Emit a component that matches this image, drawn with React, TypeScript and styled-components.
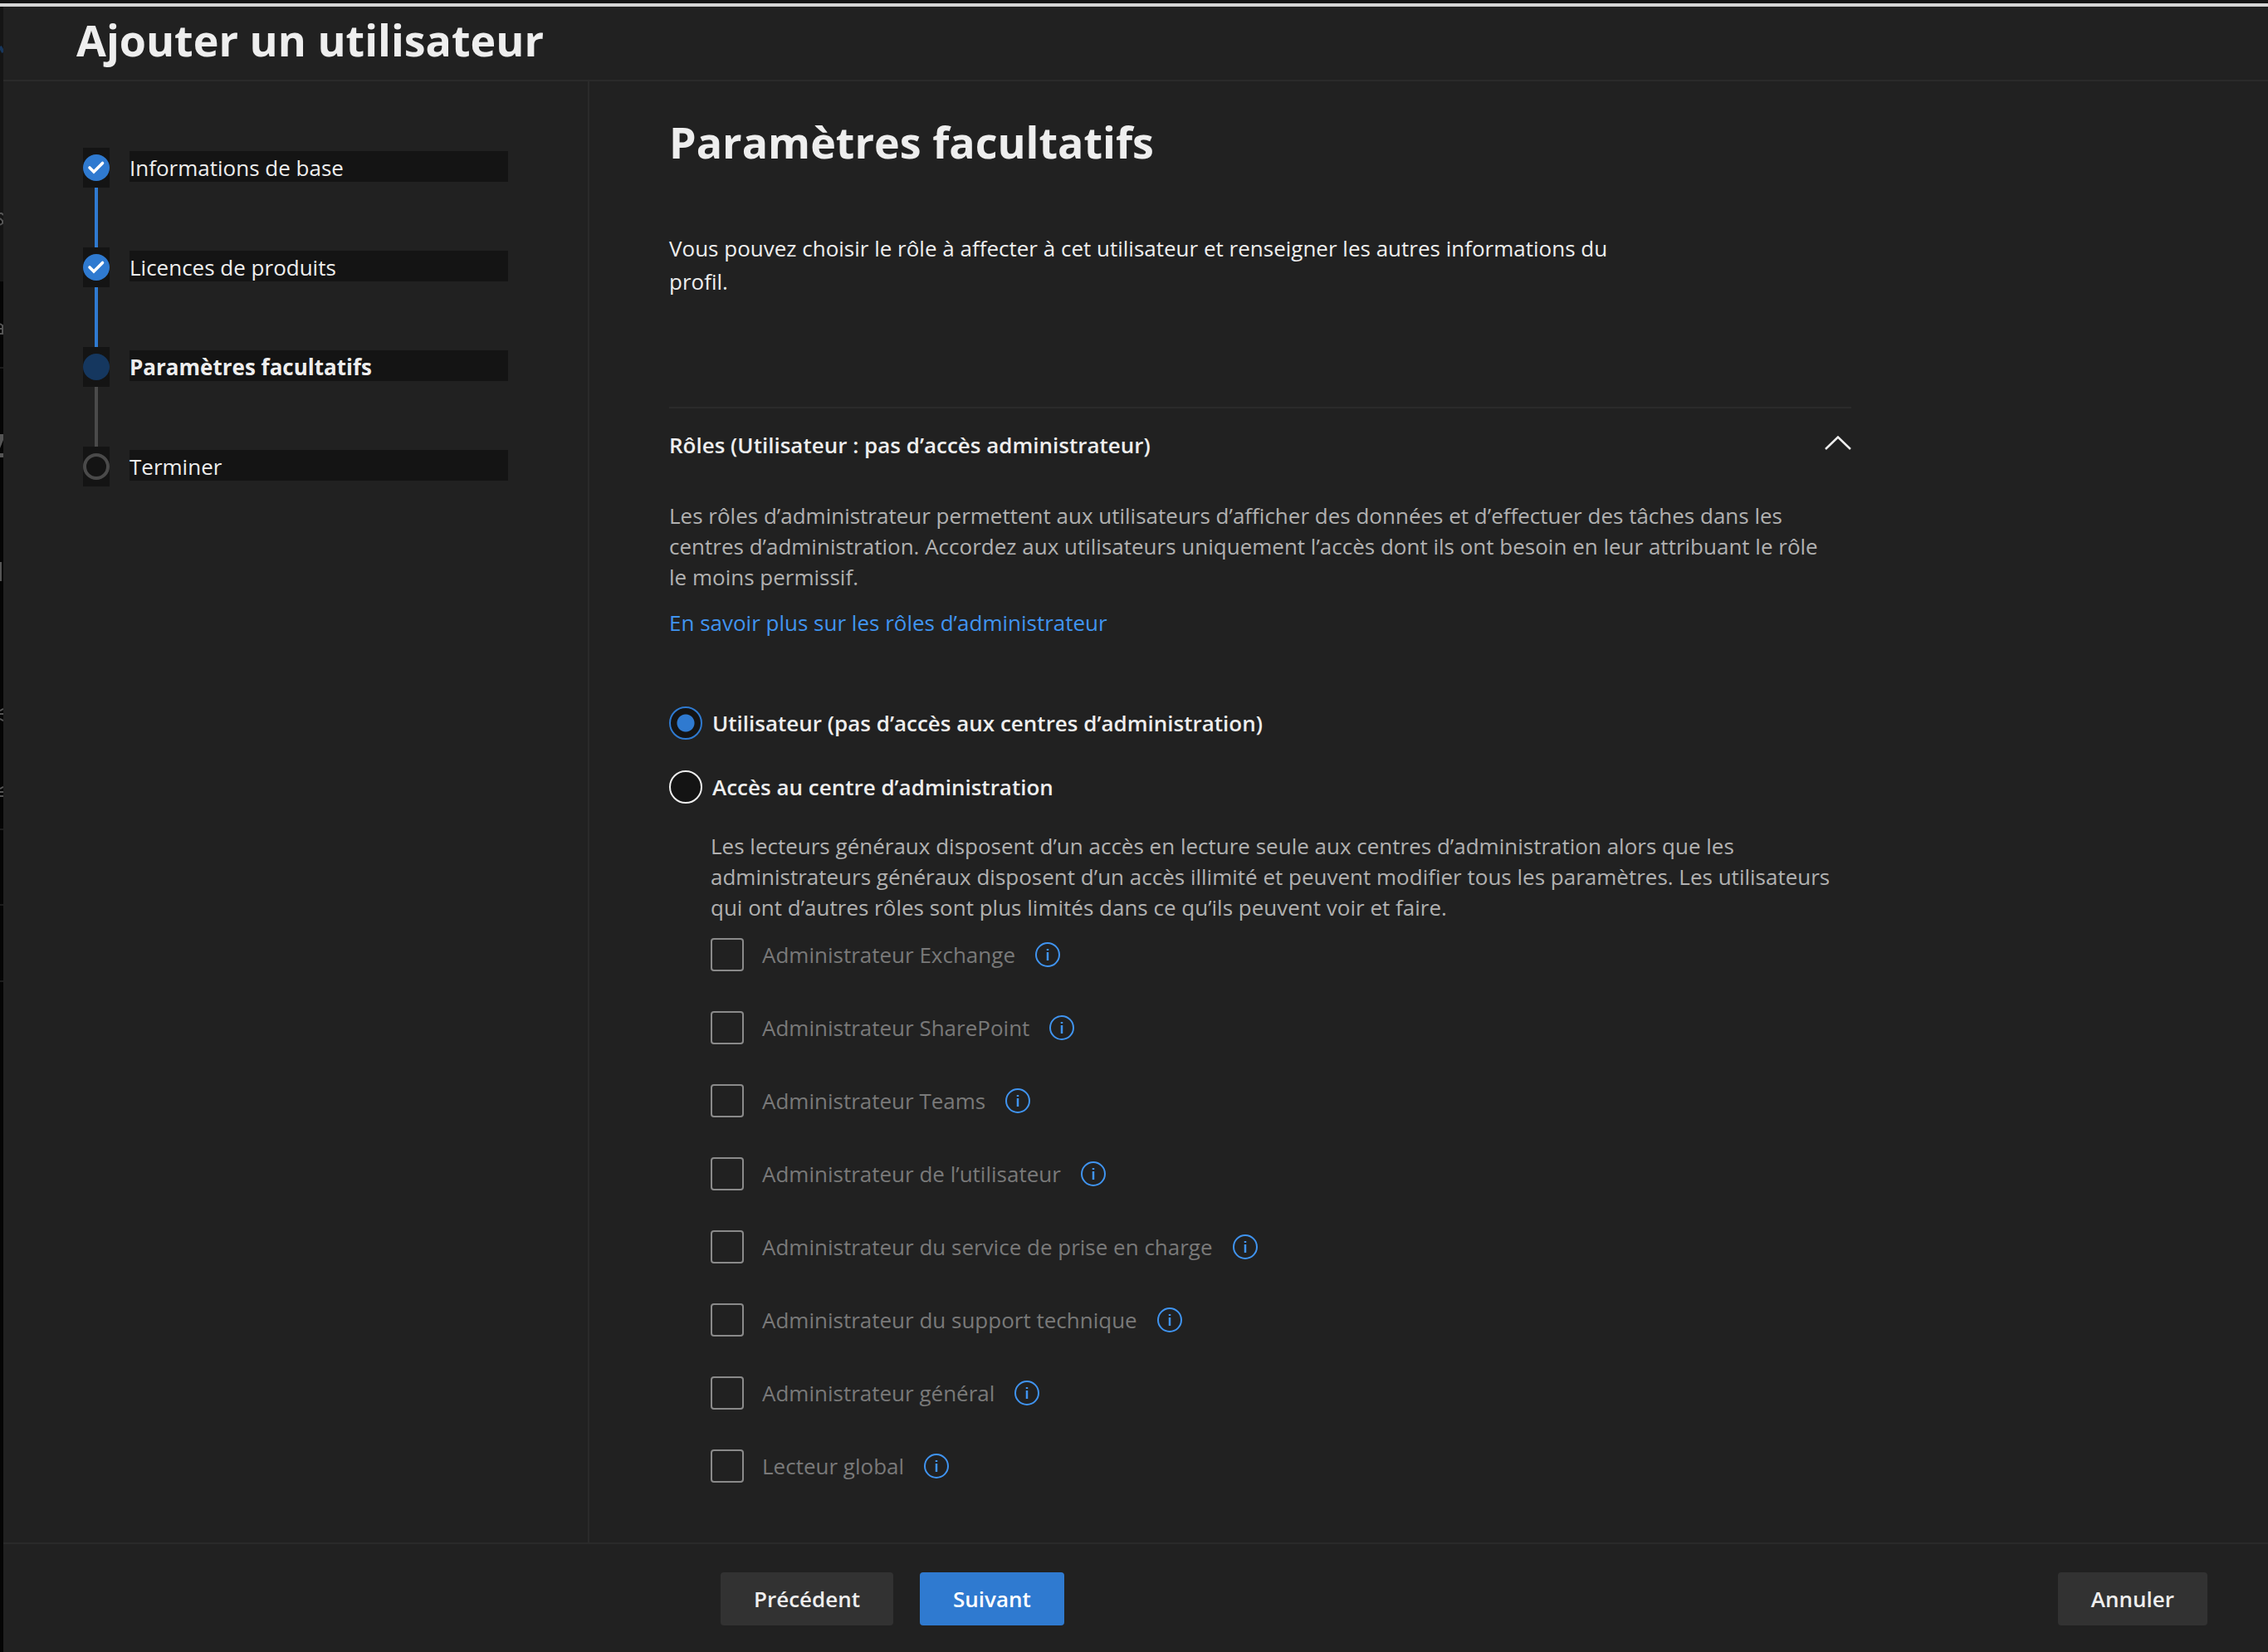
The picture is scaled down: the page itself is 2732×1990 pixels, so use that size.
import React, { useState } from "react";
import styled, { createGlobalStyle } from "styled-components";

const colors = {
  surface: "#212121",
  well: "#141414",
  line: "#2a2a2a",
  text: "#eeeeee",
  muted: "#b1b1b1",
  disabled: "#797979",
  accent: "#2f7ad0",
  link: "#4094f0",
  track: "#4a4a4a",
};

const GlobalStyle = createGlobalStyle`
  *, *::before, *::after { box-sizing: border-box; }
  body {
    margin: 0;
    background: #050505;
    color: ${colors.text};
    font-family: "Open Sans", "Noto Sans", sans-serif;
    font-size: 26px;
    line-height: 37px;
  }
  h1, h2, p, ol, ul, fieldset { margin: 0; padding: 0; border: 0; }
  ol, ul { list-style: none; }
`;

const Screen = styled.div`
  min-height: 100vh;
  display: flex;
  flex-direction: column;
`;

const WindowEdge = styled.div`
  height: 8px;
  background: #161616;
  border-bottom: 4px solid #d6d6d6;
`;

const Page = styled.div`
  flex: 1;
  display: flex;
`;

const Backdrop = styled.svg`
  width: 4px;
  height: 1982px;
  flex: none;
  margin-bottom: -100%;
`;

const Panel = styled.div`
  flex: 1;
  min-width: 0;
  display: flex;
  flex-direction: column;
  background: ${colors.surface};
`;

const Header = styled.header`
  padding: 4px 88px 12px;
  border-bottom: 2px solid ${colors.line};
`;

const Title = styled.h1`
  font-size: 52px;
  line-height: 72px;
  font-weight: 700;
`;

const Body = styled.div`
  flex: 1;
  display: flex;
`;

const Sidebar = styled.nav`
  width: 706px;
  flex: none;
  padding: 80px 96px;
  border-right: 2px solid ${colors.line};
`;

const StepItem = styled.li`
  display: flex;
  gap: 24px;
`;

const StepRail = styled.div`
  display: flex;
  flex-direction: column;
  align-items: center;
`;

const StepMark = styled.div`
  padding: 8px 0;
  background: ${colors.well};
  svg { display: block; }
`;

const Connector = styled.div<{ $done: boolean }>`
  width: 4px;
  height: 72px;
  background: ${(p) => (p.$done ? colors.accent : colors.track)};
`;

const StepLabel = styled.div<{ $current: boolean }>`
  width: 456px;
  height: 37px;
  margin-top: 4px;
  line-height: 40px;
  background: ${colors.well};
  font-weight: ${(p) => (p.$current ? 700 : 400)};
`;

const Main = styled.main`
  flex: 1;
  max-width: 1520px;
  padding: 37px 0 72px 96px;
`;

const Intro = styled.p`
  max-width: 1160px;
  margin: 72px 0 131px;
  line-height: 40px;
`;

const Section = styled.section`
  border-top: 2px solid ${colors.line};
  padding-top: 26px;
`;

const SectionToggle = styled.button`
  width: 100%;
  display: flex;
  justify-content: space-between;
  align-items: center;
  padding: 0;
  border: 0;
  background: none;
  color: inherit;
  font: inherit;
  font-weight: 600;
  text-align: left;
  cursor: pointer;
`;

const SectionBody = styled.div`
  padding-top: 48px;
`;

const Description = styled.p`
  padding-right: 20px;
  color: ${colors.muted};
`;

const HelpLink = styled.a`
  display: inline-block;
  margin: 18px 0 82px;
  color: ${colors.link};
  text-decoration: none;
`;

const RadioGroup = styled.fieldset`
  display: flex;
  flex-direction: column;
  gap: 37px;
`;

const RadioLabel = styled.label`
  display: flex;
  align-items: center;
  gap: 12px;
  font-weight: 600;
`;

const Radio = styled.input`
  appearance: none;
  width: 40px;
  height: 40px;
  margin: 0;
  border: 2px solid ${colors.text};
  border-radius: 50%;
  background: ${colors.well};
  &:checked {
    border-color: ${colors.accent};
    background: radial-gradient(circle, ${colors.accent} 10px, ${colors.well} 11px);
  }
`;

const AdminRoles = styled.div`
  margin-top: 33px;
  padding-left: 50px;
`;

const RoleList = styled.ul`
  margin-top: 18px;
  display: flex;
  flex-direction: column;
  gap: 48px;
`;

const RoleItem = styled.li`
  display: flex;
  align-items: center;
  gap: 24px;
`;

const RoleLabel = styled.label`
  display: flex;
  align-items: center;
  gap: 22px;
  color: ${colors.disabled};
`;

const Checkbox = styled.input`
  appearance: none;
  width: 40px;
  height: 40px;
  margin: 0;
  border: 2px solid #8a8a8a;
  border-radius: 4px;
  background: transparent;
`;

const InfoButton = styled.button`
  padding: 0;
  border: 0;
  background: none;
  color: ${colors.link};
  cursor: pointer;
  svg { display: block; }
`;

const Footer = styled.footer`
  display: flex;
  gap: 32px;
  padding: 34px 73px 32px 864px;
  border-top: 2px solid ${colors.line};
`;

const Button = styled.button<{ $primary?: boolean; $end?: boolean }>`
  height: 64px;
  padding: 0 40px;
  margin-left: ${(p) => (p.$end ? "auto" : "0")};
  border: 0;
  border-radius: 4px;
  background: ${(p) => (p.$primary ? colors.accent : "#323232")};
  color: ${(p) => (p.$primary ? "#ffffff" : colors.text)};
  font: inherit;
  font-weight: 600;
  cursor: pointer;
`;

type StepState = "done" | "current" | "todo";

const steps: { label: string; state: StepState }[] = [
  { label: "Informations de base", state: "done" },
  { label: "Licences de produits", state: "done" },
  { label: "Paramètres facultatifs", state: "current" },
  { label: "Terminer", state: "todo" },
];

const roles = [
  "Administrateur Exchange",
  "Administrateur SharePoint",
  "Administrateur Teams",
  "Administrateur de l’utilisateur",
  "Administrateur du service de prise en charge",
  "Administrateur du support technique",
  "Administrateur général",
  "Lecteur global",
];

const StepIcon = ({ state }: { state: StepState }) => (
  <svg width="32" height="32" viewBox="0 0 32 32" fill="none" aria-hidden="true">
    {state === "todo" ? (
      <circle cx="16" cy="16" r="14" stroke={colors.track} strokeWidth="4" />
    ) : (
      <circle cx="16" cy="16" r="16" fill={state === "done" ? colors.accent : "#15375f"} />
    )}
    {state === "done" && (
      <path d="M8 16L13 21L23.5 10.5" stroke="#ffffff" strokeWidth="3.6" strokeLinecap="round" />
    )}
  </svg>
);

const InfoIcon = () => (
  <svg width="30" height="30" viewBox="0 0 30 30" fill="none" aria-hidden="true">
    <circle cx="15" cy="15" r="14" stroke="currentColor" strokeWidth="2" />
    <path d="M15 12V22M15 8V10" stroke="currentColor" strokeWidth="2.5" />
  </svg>
);

const Chevron = () => (
  <svg width="32" height="24" viewBox="0 0 32 24" fill="none" aria-hidden="true">
    <path d="M1 16L16 1.5L31 16" stroke="currentColor" strokeWidth="2.5" />
  </svg>
);

export default function App() {
  const [open, setOpen] = useState(true);
  const [access, setAccess] = useState("user");

  return (
    <>
      <GlobalStyle />
      <Screen>
        <WindowEdge />
        <Page>
          <Backdrop viewBox="0 0 4 1982" aria-hidden="true">
            <rect width="4" height="331" fill="#151515" />
            <path d="M0 48L4 55" stroke="#17365c" strokeWidth="4" />
            <path d="M0 249H2L4 251M0 255L3 258V261L0 263M0 382L3 384V394M0 388H3M0 394H4M4 846L0 848M0 852H4M0 858L4 860M4 940L0 942M0 946H4M0 951H4" stroke="#555555" strokeWidth="2" />
            <path d="M0 435H4M0 991H4M0 1082H4M0 1174H4" stroke="#1c1c1c" strokeWidth="2" />
            <path d="M0 515H4V522L0 532V515ZM0 538H4V543H0Z" fill="#555555" />
            <rect y="669" width="2" height="23" fill="#555555" />
          </Backdrop>
          <Panel>
            <Header>
              <Title>Ajouter un utilisateur</Title>
            </Header>
            <Body>
              <Sidebar aria-label="Étapes">
                <ol>
                  {steps.map((step, i) => (
                    <StepItem key={step.label} aria-current={step.state === "current" ? "step" : undefined}>
                      <StepRail>
                        <StepMark>
                          <StepIcon state={step.state} />
                        </StepMark>
                        {i < steps.length - 1 && <Connector $done={step.state === "done"} />}
                      </StepRail>
                      <StepLabel $current={step.state === "current"}>{step.label}</StepLabel>
                    </StepItem>
                  ))}
                </ol>
              </Sidebar>
              <Main>
                <Title as="h2">Paramètres facultatifs</Title>
                <Intro>
                  Vous pouvez choisir le rôle à affecter à cet utilisateur et renseigner les autres informations du
                  profil.
                </Intro>
                <Section>
                  <SectionToggle type="button" aria-expanded={open} onClick={() => setOpen(!open)}>
                    Rôles (Utilisateur : pas d’accès administrateur)
                    <Chevron />
                  </SectionToggle>
                  {open && (
                    <SectionBody>
                      <Description>
                        Les rôles d’administrateur permettent aux utilisateurs d’afficher des données et d’effectuer
                        des tâches dans les centres d’administration. Accordez aux utilisateurs uniquement l’accès
                        dont ils ont besoin en leur attribuant le rôle le moins permissif.
                      </Description>
                      <HelpLink href="#roles">En savoir plus sur les rôles d’administrateur</HelpLink>
                      <RadioGroup>
                        <RadioLabel>
                          <Radio
                            type="radio"
                            name="access"
                            checked={access === "user"}
                            onChange={() => setAccess("user")}
                          />
                          Utilisateur (pas d’accès aux centres d’administration)
                        </RadioLabel>
                        <RadioLabel>
                          <Radio
                            type="radio"
                            name="access"
                            checked={access === "admin"}
                            onChange={() => setAccess("admin")}
                          />
                          Accès au centre d’administration
                        </RadioLabel>
                      </RadioGroup>
                      <AdminRoles>
                        <Description>
                          Les lecteurs généraux disposent d’un accès en lecture seule aux centres d’administration
                          alors que les administrateurs généraux disposent d’un accès illimité et peuvent modifier
                          tous les paramètres. Les utilisateurs qui ont d’autres rôles sont plus limités dans ce
                          qu’ils peuvent voir et faire.
                        </Description>
                        <RoleList>
                          {roles.map((role) => (
                            <RoleItem key={role}>
                              <RoleLabel>
                                <Checkbox type="checkbox" disabled={access === "user"} />
                                {role}
                              </RoleLabel>
                              <InfoButton type="button" aria-label={role}>
                                <InfoIcon />
                              </InfoButton>
                            </RoleItem>
                          ))}
                        </RoleList>
                      </AdminRoles>
                    </SectionBody>
                  )}
                </Section>
              </Main>
            </Body>
            <Footer>
              <Button type="button">Précédent</Button>
              <Button type="button" $primary>
                Suivant
              </Button>
              <Button type="button" $end>
                Annuler
              </Button>
            </Footer>
          </Panel>
        </Page>
      </Screen>
    </>
  );
}
